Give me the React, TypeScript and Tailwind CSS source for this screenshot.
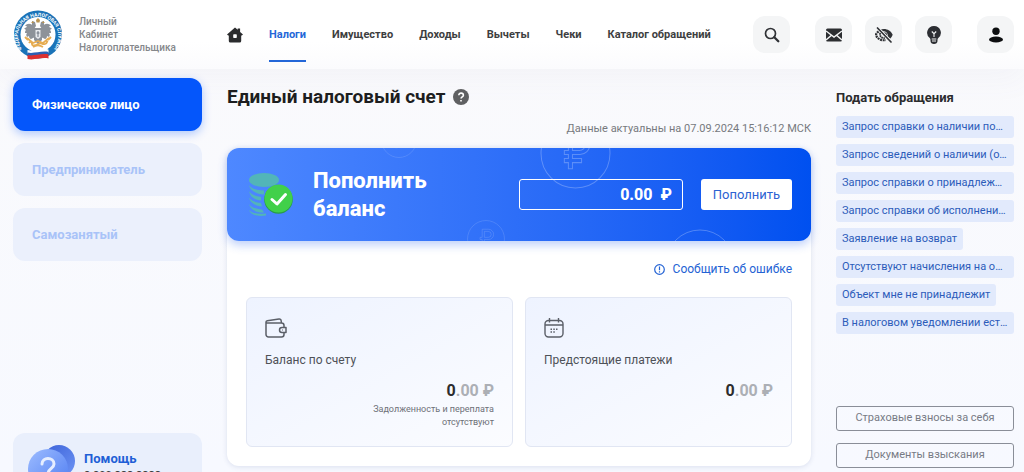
import React, { useState } from 'react';

const NAV_ITEMS = ['Налоги', 'Имущество', 'Доходы', 'Вычеты', 'Чеки', 'Каталог обращений'];

const ROLES = ['Физическое лицо', 'Предприниматель', 'Самозанятый'];

const REQUESTS = [
  'Запрос справки о наличии положительного сальдо',
  'Запрос сведений о наличии (отсутствии) задолженности',
  'Запрос справки о принадлежности сумм',
  'Запрос справки об исполнении обязанности',
  'Заявление на возврат',
  'Отсутствуют начисления на объект',
  'Объект мне не принадлежит',
  'В налоговом уведомлении есть ошибка',
];

const Logo: React.FC = () => (
  <svg className="w-[50px] h-[50px] shrink-0" viewBox="0 0 50 50" aria-hidden="true">
    <defs>
      <path id="ring" d="M9.5 39.5 A20.2 20.2 0 1 1 40.5 39.5" />
    </defs>
    <circle cx="25" cy="24.5" r="24" fill="#1a73b8" />
    <circle cx="25" cy="24.5" r="17.5" fill="#fff" />
    <text fill="#fff" fontSize="5" fontWeight="700" fontFamily="Roboto, sans-serif">
      <textPath href="#ring" startOffset="50%" textAnchor="middle">ФЕДЕРАЛЬНАЯ НАЛОГОВАЯ СЛУЖБА</textPath>
    </text>
    <g fill="#8d9299">
      <path d="M24 19c-2 0-3-1-4-3-2-3-6-3-8 0 1 0 2 0 2 1-1 0-2 1-3 2 1 0 1 0 2 1-1 1-1 2-1 3h2c-1 1-1 3 0 4l2-1c0 2 1 3 2 3l6-3z" />
      <path d="M26 19c2 0 3-1 4-3 2-3 6-3 8 0-1 0-2 0-2 1 1 0 2 1 3 2-1 0-1 0-2 1 1 1 1 2 1 3h-2c1 1 1 3 0 4l-2-1c0 2-1 3-2 3l-6-3z" />
      <path d="M21 18h8v12l-4 4-4-4z" />
      <path d="M19 11l3 1 1 4-2 3-2-3zM31 11l-3 1-1 4 2 3 2-3z" />
    </g>
    <path d="M23 10l2-2 2 2-.5 2.500h-3zM18 13l2-2 1 2zM32 13l-2-2-1 2z" fill="#b99452" />
    <path d="M22.500 20h5v7l-2.500 2-2.500-2z" fill="#e8eaee" />
    <path d="M25 21v6M23.500 23h3" stroke="#6d7580" fill="none" />
    <path d="M14 28l6 5 5-2 5 2 6-5M16 33c1-2 3-1 3 1s3 2 6 0 4 1 7 0 1-3 3-2M12 27l3 3M38 27l-3 3M20 37c3-2 7-2 10 0" stroke="#e6ac51" strokeWidth="1.800" fill="none" />
    <path d="M14.500 40c6 1.500 14-2 21-.5v3.500c-7-1.500-14 2-21 .5z" fill="#fff" />
    <path d="M14.500 42.500c6 1.500 14-2 21-.5v3c-7-1.500-14 2-21 .5z" fill="#2b5fb4" />
    <path d="M14.500 45c6 1.500 14-2 21-.5v4c-7-1.500-14 2-21 .5z" fill="#dc3030" />
  </svg>
);

const SearchIcon = () => (
  <svg className="w-4 h-4" viewBox="0 0 16 16" fill="none" stroke="#303236">
    <circle cx="6.500" cy="6.500" r="5" strokeWidth="1.700" />
    <path d="M10.300 10.300l4 4" strokeWidth="2.300" strokeLinecap="round" />
  </svg>
);

const MailIcon = () => (
  <svg className="w-4 h-4" viewBox="0 0 16 16" fill="#2c2e31">
    <rect y="1.500" width="16" height="13" rx="1.500" />
    <path d="M0 4l8 6 8-6M0 13l5.500-4.800M16 13l-5.500-4.800" fill="none" stroke="#f4f5f6" strokeWidth="1.400" />
  </svg>
);

const EyeOffIcon = () => (
  <svg className="w-[18px] h-4" viewBox="0 0 18 16" fill="none">
    <path d="M4.500 3.300C9 .5 15.500 2.500 17.700 7.800c-.6 1.700-1.500 3-2.600 4L12.800 9.500A4.300 4.300 0 0 0 7 4.600z" fill="#303236" />
    <path d="M8.500 5.200l3.800 3.800c.3-2.300-1.500-4.100-3.800-3.800z" fill="#303236" />
    <path d="M3.600 4.500C2.300 5.400 1.300 6.500.8 8c1.700 3.900 5.600 6 10 5" stroke="#303236" strokeWidth="2.200" strokeDasharray="2 .7" />
    <path d="M5.200 6c-.8 3 1.200 5.400 4.600 5" stroke="#303236" strokeWidth="1.800" strokeDasharray="1.700 .6" />
    <path d="M4 1l13 13.500" stroke="#f4f5f6" strokeWidth="1.200" />
    <path d="M2.500 1l13.500 14" stroke="#303236" strokeWidth="1.700" strokeLinecap="round" />
  </svg>
);

const BulbIcon = () => (
  <svg className="w-4 h-[18px]" viewBox="0 0 16 18">
    <path d="M8 0a6.800 6.800 0 0 0-4.300 12.100c.5.500.8 1 .8 1.700V15c0 1.700 1.500 3 3.500 3s3.500-1.300 3.500-3v-1.200c0-.7.300-1.200.8-1.700A6.800 6.800 0 0 0 8 0z" fill="#2c2e33" />
    <path d="M5.800 5.500L8 7.700l2.200-2.200M8 7.700V11" fill="none" stroke="#f4f5f6" strokeWidth="1.100" />
    <path d="M5.700 13h4.600M6 15h4" stroke="#f4f5f6" strokeWidth="1" />
  </svg>
);

const UserIcon = () => (
  <svg className="w-4 h-4" viewBox="0 0 16 16" fill="#0d0e10">
    <circle cx="8" cy="4.200" r="3.700" />
    <ellipse cx="8" cy="12.500" rx="7" ry="3" />
  </svg>
);

const HomeIcon = () => (
  <svg className="w-4 h-4" viewBox="0 0 16 16">
    <path d="M8 .5l2.700 2.300V1.500h2.400v3.400L16 7.400l-1.200 1.200h-.6V14a1.600 1.600 0 0 1-1.600 1.600H3.400A1.600 1.600 0 0 1 1.800 14V8.600h-.6L0 7.400z" fill="#2b2c2e" />
    <rect x="6.200" y="7.300" width="3.600" height="3.600" rx=".7" fill="#fff" />
  </svg>
);

const RoubleCircle: React.FC<{ className: string; size: number }> = ({ className, size }) => (
  <svg className={`absolute pointer-events-none ${className}`} width={size} height={size} viewBox="0 0 70 70" fill="none" stroke="#fff" strokeOpacity=".25">
    <circle cx="35" cy="35" r="34" />
    <path d="M29 17h10.500a9 9 0 0 1 0 19H32v4h9v4h-9v6h-4v-6h-4v-4h4v-4h-4v-4h4V17zM32 21v11h7a5.500 5.500 0 0 0 0-11z" />
  </svg>
);

const CoinsIcon = () => (
  <svg className="w-[45px] h-[45px] shrink-0" viewBox="0 0 45 45">
    <g fill="#52b5b8">
      <ellipse cx="16" cy="8" rx="15" ry="7" />
      <path d="M1 13c2 3.500 8 5.500 15 5.500v4C8 22 2 18.500 1 13zM1 19c2 3.500 6 5 12 6v3.500C6 28 2 24.500 1 19zM1 25.500c2 3 6 5 12 5.500l1 3.500c-7-.5-12-4-13-9zM1 32c2 3 6 5 13 5.500l2 3c-8 .5-14-3.500-15-8.500z" />
      <path d="M1 38c3 3.500 9 4.500 17 3.500v2C9 45 2 42.500 1 38z" />
    </g>
    <circle cx="30.500" cy="27.500" r="14.300" fill="#289c48" />
    <circle cx="30.500" cy="26.500" r="14" fill="#41d04a" />
    <path d="M24 27.500l5 4.500 8.500-9.500" fill="none" stroke="#fff" strokeWidth="3" strokeLinecap="round" strokeLinejoin="round" />
  </svg>
);

const WalletIcon = () => (
  <svg className="w-[22px] h-5" viewBox="0 0 22 20" fill="none" stroke="#5b5f68" strokeWidth="1.500" strokeLinejoin="round">
    <path d="M1 4v12.500A2.500 2.500 0 0 0 3.500 19h13a2.500 2.500 0 0 0 2.500-2.500V14.500M19 9.500V7.500A2.500 2.500 0 0 0 16.500 5H2.500C1.500 5 1 4.600 1 4c0-.7.600-1.100 1.300-1.300L14 1c1.200-.2 2 .5 2.100 1.500L16.500 5" />
    <path d="M21 9.500h-4a2.500 2.500 0 0 0 0 5h4zM17 12h.600" />
  </svg>
);

const CalendarIcon = () => (
  <svg className="w-5 h-5" viewBox="0 0 20 20" fill="none" stroke="#5b5f68" strokeWidth="1.400">
    <rect x="1" y="2.500" width="18" height="16.500" rx="3.500" />
    <path d="M1 7h18M5.500 0v4.500M14.500 0v4.500" />
    <path d="M6.500 11.300h1.500M9.300 11.300h1.500M12 11.300h1.500M6.500 14h1.500M9.300 14h1.500" strokeWidth="1.500" />
  </svg>
);

const HelpBubble = () => (
  <svg className="w-[48px] h-[48px] shrink-0" viewBox="0 0 48 48">
    <defs>
      <linearGradient id="back" x1="0" x2="1" y2="1">
        <stop stopColor="#3c62d8" />
        <stop offset="1" stopColor="#6d94f5" />
      </linearGradient>
      <linearGradient id="front" x1="0" x2="1" y2="1">
        <stop stopColor="#9dbcff" />
        <stop offset="1" stopColor="#4f7df2" />
      </linearGradient>
    </defs>
    <circle cx="31" cy="16" r="16" fill="url(#back)" />
    <circle cx="20" cy="24" r="20" fill="url(#front)" />
    <path d="M14 19c0-7.500 12-7 12 0 0 4.500-6 4.500-6 10M20 33v1" fill="none" stroke="#e6eeff" strokeWidth="3" strokeLinecap="round" />
  </svg>
);

const iconButton = 'w-[37px] h-[37px] rounded-xl bg-[#f4f5f6] flex items-center justify-center';

const App: React.FC = () => {
  const [role, setRole] = useState(ROLES[0]);
  const [amount, setAmount] = useState('0.00');

  return (
    <div className="h-screen overflow-hidden bg-linear-to-b from-[#fafafc] to-[#f7f9ff] font-[Roboto,sans-serif] text-[#2b2c2e]">
      <header className="h-[69px] pl-[13px] pr-[10px] flex items-center gap-[25px] bg-linear-to-b from-white from-60% to-[#fbfbfd] shadow-[0_10px_30px_rgba(120,125,150,0.05)]">
        <a href="#" className="w-[189px] shrink-0 flex items-center gap-4">
          <Logo />
          <span className="text-[10px] leading-[13px] font-medium text-[#85878b]">
            Личный<br />Кабинет<br />Налогоплательщика
          </span>
        </a>
        <nav className="flex-1 self-stretch flex items-center gap-[26px] text-[11px] font-bold">
          <a href="#" aria-label="Главная"><HomeIcon /></a>
          {NAV_ITEMS.map((item, i) => (
            <a
              key={item}
              href="#"
              className={`h-[54px] pt-1 flex items-center whitespace-nowrap border-b-2 ${
                i === 0 ? 'text-[#2467d8] border-[#2467d8]' : 'text-[#3d3e40] border-transparent'
              }`}
            >
              {item}
            </a>
          ))}
        </nav>
        <div className="flex items-center gap-[25px]">
          <button aria-label="Поиск" className={iconButton}><SearchIcon /></button>
          <div className="flex gap-[13px]">
            <button aria-label="Сообщения" className={iconButton}><MailIcon /></button>
            <button aria-label="Версия для слабовидящих" className={iconButton}><EyeOffIcon /></button>
            <button aria-label="Подсказки" className={iconButton}><BulbIcon /></button>
          </div>
          <button aria-label="Профиль" className={iconButton}><UserIcon /></button>
        </div>
      </header>

      <div className="pt-[9px] pl-[13px] pr-[10px] grid grid-cols-[189px_minmax(0,1fr)_178px] gap-[25px]">
        <aside className="flex flex-col gap-3">
          {ROLES.map((item) => (
            <button
              key={item}
              onClick={() => setRole(item)}
              className={`h-[53px] px-[19px] rounded-xl text-left text-[13px] font-bold ${
                role === item
                  ? 'bg-[#0456fb] text-white shadow-[0_3px_10px_rgba(4,86,251,0.3)]'
                  : 'bg-[#ebf0fc] text-[#a9c3f8]'
              }`}
            >
              {item}
            </button>
          ))}
          <div className="mt-40 h-[90px] px-[15px] pt-3 rounded-xl bg-[#e9effc] flex items-start gap-2">
            <HelpBubble />
            <div className="pt-1 text-[13px] leading-[20px] font-bold text-[#1f5fd6]">
              Помощь
              <div className="text-[11px] leading-[14px] font-medium text-[#3d3e40]">8 800 222 2222</div>
            </div>
          </div>
        </aside>

        <main>
          <h1 className="pt-[5px] flex items-center gap-2 text-[19px] leading-[28px] font-bold text-[#1d1e20]">
            Единый налоговый счет
            <svg className="w-4 h-4" viewBox="0 0 16 16">
              <circle cx="8" cy="8" r="8" fill="#5f6062" />
              <path d="M5.800 6.300c0-3 4.600-2.900 4.600 0 0 1.600-2.300 1.600-2.300 3.200M8 11v1.500" fill="none" stroke="#fff" strokeWidth="1.600" />
            </svg>
          </h1>
          <p className="mt-[10px] text-right text-[11px] leading-[16px] text-[#77797e]">
            Данные актуальны на 07.09.2024 15:16:12 МСК
          </p>

          <section className="mt-[11px] rounded-xl bg-white shadow-[0_1px_5px_rgba(60,80,140,0.15)]">
            <div className="relative overflow-hidden h-[93px] pl-[21px] pr-[19px] flex items-center rounded-xl bg-linear-to-r from-[#4e88ff] to-[#0050f0] shadow-[0_4px_10px_rgba(40,100,240,0.3)]">
              <RoubleCircle size={36} className="left-[154px] -top-[26px]" />
              <RoubleCircle size={38} className="left-[240px] top-[72px]" />
              <RoubleCircle size={71} className="left-[313px] -top-[30px]" />
              <RoubleCircle size={70} className="left-[438px] top-[81px]" />
              <CoinsIcon />
              <h2 className="ml-5 w-[206px] shrink-0 text-[22px] leading-[28px] font-extrabold text-white">
                Пополнить<br />баланс
              </h2>
              <label className="relative flex-1 min-w-0 h-[31px] px-[10px] flex items-center gap-2 rounded-[3px] border border-white text-[16px] font-extrabold text-white">
                <input
                  aria-label="Сумма"
                  value={amount}
                  onChange={(e) => setAmount(e.target.value)}
                  className="flex-1 min-w-0 bg-transparent text-right outline-none"
                />
                ₽
              </label>
              <button className="relative ml-[18px] w-[91px] h-[31px] shrink-0 rounded-[3px] bg-white text-[13px] text-[#2c62d2]">
                Пополнить
              </button>
            </div>

            <div className="px-[19px] pt-[18px] pb-[19px]">
              <a href="#" className="flex items-center justify-end gap-2 text-[12px] leading-[20px] text-[#2463d4]">
                <svg className="w-[11px] h-[11px]" viewBox="0 0 11 11" fill="none" stroke="currentColor" strokeWidth="1.200">
                  <circle cx="5.500" cy="5.500" r="4.800" />
                  <path d="M5.500 2.500v3.700M5.500 7.300v1.200" />
                </svg>
                Сообщить об ошибке
              </a>
              <div className="mt-[18px] grid grid-cols-2 gap-3">
                <article className="h-[150px] px-[18px] pt-5 rounded-md border border-[#e1e6f3] bg-linear-to-br from-[#eef3ff] to-[#fbfcff]">
                  <WalletIcon />
                  <h3 className="mt-3 text-[12px] leading-[20px] text-[#4e5157]">Баланс по счету</h3>
                  <div className="mt-3 text-right text-[16px] leading-[18px] font-bold text-[#acafb5]">
                    <span className="text-[#2b2c2e]">0</span>.00 ₽
                  </div>
                  <p className="mt-[3px] text-right text-[9px] leading-[13px] text-[#6d7077]">
                    Задолженность и переплата<br />отсутствуют
                  </p>
                </article>
                <article className="h-[150px] px-[18px] pt-5 rounded-md border border-[#e1e6f3] bg-linear-to-br from-[#eef3ff] to-[#fbfcff]">
                  <CalendarIcon />
                  <h3 className="mt-3 text-[12px] leading-[20px] text-[#4e5157]">Предстоящие платежи</h3>
                  <div className="mt-3 text-right text-[16px] leading-[18px] font-bold text-[#acafb5]">
                    <span className="text-[#2b2c2e]">0</span>.00 ₽
                  </div>
                </article>
              </div>
            </div>
          </section>
        </main>

        <aside>
          <h2 className="pt-[10px] text-[13px] leading-[20px] font-bold">Подать обращения</h2>
          <ul className="mt-2 flex flex-col items-start gap-[6px]">
            {REQUESTS.map((item) => (
              <li key={item} className="max-w-full flex">
                <a href="#" className="h-[22px] px-[6px] truncate rounded-[3px] bg-[#e2eafc] text-[11px] leading-[22px] text-[#2c5cba]">
                  {item}
                </a>
              </li>
            ))}
          </ul>
          <div className="mt-[72px] flex flex-col gap-3 text-[11px] text-[#777b85]">
            <button className="h-[25px] rounded-[3px] border border-[#8a8e98]">Страховые взносы за себя</button>
            <button className="h-[25px] rounded-[3px] border border-[#8a8e98]">Документы взыскания</button>
          </div>
        </aside>
      </div>
    </div>
  );
};

export default App;
